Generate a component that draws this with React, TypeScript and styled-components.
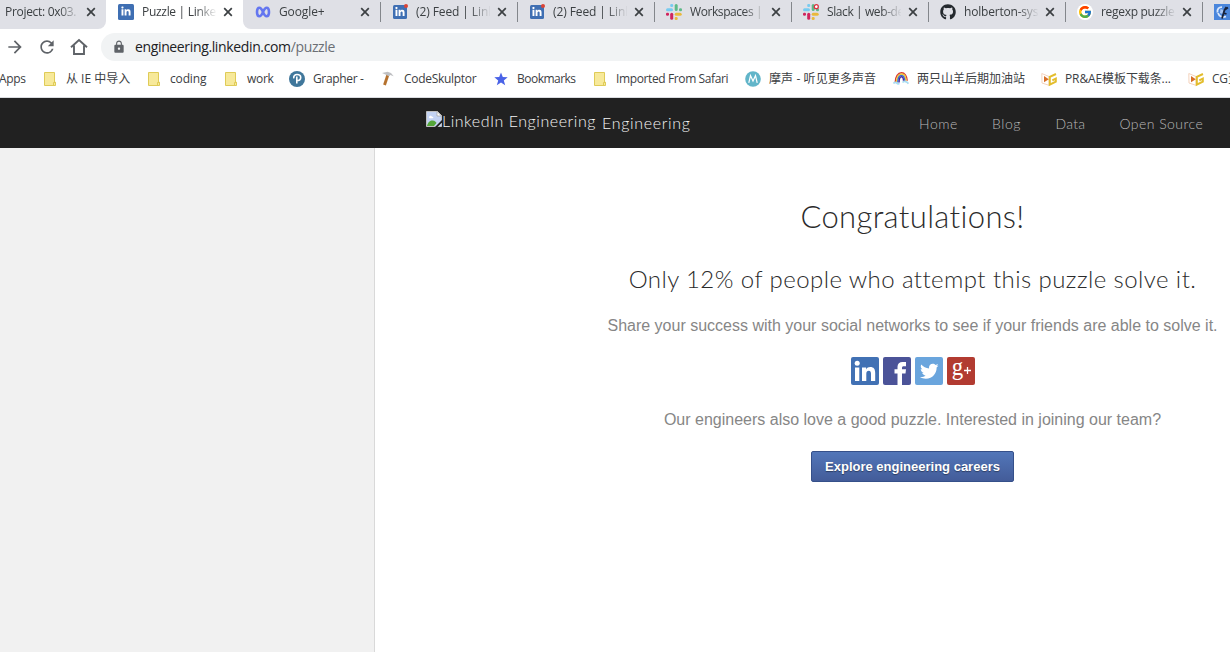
import React from "react";
import styled, { createGlobalStyle, css } from "styled-components";
import { FaGithub, FaLinkedinIn, FaTwitter } from "react-icons/fa";
import { FcGoogle } from "react-icons/fc";
import { MdArrowForward, MdLock, MdRefresh } from "react-icons/md";

const Global = createGlobalStyle`
  * { box-sizing: border-box; }
  body { margin: 0; background: #fff; overflow: hidden; }
`;

const uiFont = `"Open Sans", "Noto Sans CJK SC", sans-serif`;
const brandFont = `Lato, "Liberation Sans", sans-serif`;

const Window = styled.div`
  width: 1230px;
  height: 652px;
  display: flex;
  flex-direction: column;
  overflow: hidden;
`;

/* Tab strip */
const TabStrip = styled.div`
  display: flex;
  flex: none;
  height: 29px;
  margin-left: -31px;
`;

const TabBox = styled.div<{ $active?: boolean; $edge?: "before" | "after" }>`
  display: flex;
  align-items: center;
  flex: none;
  width: 137px;
  height: 29px;
  padding: 0 0 5px 12px;
  background: ${(p) => (p.$active ? "#fff" : "#dfe0e6")};
  ${(p) => p.$edge === "before" && css`border-bottom-right-radius: 8px;`}
  ${(p) => p.$edge === "after" && css`border-bottom-left-radius: 8px;`}
`;

const Divider = styled.i`
  flex: none;
  width: 1px;
  height: 20px;
  margin: 0 11px 0 -12px;
  background: #83868b;
`;

const TabIcon = styled.span`
  display: flex;
  flex: none;
  width: 16px;
  height: 16px;
  margin-right: 8px;
`;

const TabTitle = styled.span<{ $ls?: number }>`
  flex: none;
  width: 74px;
  height: 18px;
  overflow: hidden;
  white-space: nowrap;
  font: 12px/18px ${uiFont};
  letter-spacing: ${(p) => p.$ls ?? 0}px;
  color: #3c4043;
  mask-image: linear-gradient(to right, #000 54px, transparent 75px);
`;

const CloseIcon = styled.svg`
  flex: none;
  width: 10px;
  height: 10px;
  margin-left: 7px;
`;

/* Address row */
const Toolbar = styled.div`
  display: flex;
  align-items: center;
  flex: none;
  height: 36px;
  padding-left: 5px;
  color: #5f6368;
`;

const ToolIcon = styled.span`
  display: flex;
  flex: none;
  width: 20px;
  margin-right: 12px;
`;

const AddressBar = styled.div`
  display: flex;
  align-items: center;
  flex: 1;
  height: 28px;
  padding-left: 11px;
  border-radius: 14px 0 0 14px;
  background: #f1f3f4;
`;

const Url = styled.span`
  margin-left: 9px;
  white-space: nowrap;
  font: 14px/20px ${uiFont};
  letter-spacing: -0.36px;
  color: #202124;
  span { color: #6b6f74; }
`;

/* Bookmarks */
const BookmarksBar = styled.div`
  display: flex;
  align-items: center;
  flex: none;
  height: 33px;
  padding-bottom: 4px;
  border-bottom: 1px solid #dadce0;
`;

const Bookmark = styled.div<{ $w: number; $ls?: number }>`
  display: flex;
  align-items: center;
  flex: none;
  width: ${(p) => p.$w}px;
  gap: 8px;
  white-space: nowrap;
  font: 12px/18px ${uiFont};
  letter-spacing: ${(p) => p.$ls ?? 0}px;
  color: #3c4043;
  svg { flex: none; width: 16px; height: 16px; }
`;

const FirstBookmark = styled(Bookmark)`
  margin-left: -1px;
`;

/* Site */
const SiteHeader = styled.header`
  display: flex;
  align-items: center;
  flex: none;
  height: 50px;
  padding-left: 426px;
  background: #212121;
  font-family: ${brandFont};
`;

const Logo = styled.a`
  display: flex;
  flex: none;
  width: 493px;
  font-size: 16px;
  line-height: 20px;
  font-weight: 300;
  color: #f4f4f4;
  white-space: nowrap;
  svg { flex: none; width: 16px; height: 16px; margin-top: -2px; }
`;

const AltText = styled.span`
  width: 160px;
  margin-top: -2px;
  letter-spacing: 0.55px;
`;

const LogoName = styled.span`
  letter-spacing: 0.68px;
`;

const NavLink = styled.a<{ $w: number; $ls: number }>`
  flex: none;
  width: ${(p) => p.$w}px;
  padding-top: 2px;
  font-size: 14px;
  line-height: 20px;
  font-weight: 300;
  letter-spacing: ${(p) => p.$ls}px;
  white-space: nowrap;
  color: #b8b8b8;
`;

const Body = styled.div`
  display: flex;
  flex: 1;
`;

const Sidebar = styled.aside`
  flex: none;
  width: 375px;
  border-right: 1px solid #d9d9d9;
  background: #f1f1f1;
`;

const Content = styled.main`
  display: flex;
  flex-direction: column;
  align-items: center;
  flex: none;
  width: 1075px;
  padding-top: 48px;
  background: #fff;
`;

const Title = styled.h1`
  margin: 0;
  font: 300 31px/40px ${brandFont};
  letter-spacing: 0.35px;
  color: #2b2b2b;
`;

const Subtitle = styled.h2`
  margin: 26px 0 0;
  font: 300 24px/34px ${brandFont};
  letter-spacing: 0.43px;
  white-space: nowrap;
  color: #2b2b2b;
`;

const Copy = styled.p<{ $top: number }>`
  margin: ${(p) => p.$top}px 0 0;
  font: 16px/20px "Liberation Sans", Arial, sans-serif;
  white-space: nowrap;
  color: #868686;
`;

const ShareRow = styled.div`
  display: flex;
  gap: 4px;
  margin-top: 21px;
`;

const ShareButton = styled.a<{ $bg: string }>`
  display: flex;
  width: 28px;
  height: 28px;
  border-radius: 2px;
  overflow: hidden;
  background: ${(p) => p.$bg};
  color: #fff;
  > svg { width: 28px; height: 28px; }
`;

const CareersButton = styled.a`
  width: 203px;
  height: 31px;
  margin-top: 21px;
  border: 1px solid #35508a;
  border-radius: 2px;
  background: linear-gradient(#5276b9, #435c99);
  text-align: center;
  font: bold 13px/29px "Liberation Sans", Arial, sans-serif;
  color: #fff;
  text-shadow: 0 1px 1px rgba(0, 0, 0, 0.4);
`;

/* Icons */
const LinkedIn = ({ badge }: { badge?: boolean }) => (
  <svg viewBox="0 0 16 16" width="16" height="16">
    <rect x={badge ? 1 : 0} y={badge ? 1 : 0} width={badge ? 14 : 16} height={badge ? 14 : 16} rx="1.5" fill="#3f6fb3" />
    <FaLinkedinIn x="2.7" y={badge ? 2.8 : 2.3} size={10.5} color="#fff" />
    {badge && <circle cx="14" cy="2" r="2" fill="#db4437" />}
  </svg>
);

const Loops = () => (
  <svg viewBox="0 0 16 16" width="16" height="16" fill="none" stroke="#6476f0" strokeWidth="2.6">
    <path d="M8 8C6.8 5.2 5.8 3.7 4.4 3.7C2.8 3.7 2 5.7 2 8s.8 4.300 2.400 4.300C5.800 12.300 6.800 10.800 8 8s2.200-4.300 3.600-4.300c1.600 0 2.400 2 2.400 4.300s-.8 4.300-2.400 4.300C10.200 12.300 9.200 10.800 8 8z" />
  </svg>
);

const Slack = ({ alert }: { alert?: boolean }) => (
  <svg viewBox="0 0 16 16" width="16" height="16">
    <g fill="#78cbf0"><rect x="0" y="4.3" width="7" height="3" rx="1.5" /><rect x="4.2" y="0" width="3" height="3" rx="1.3" /></g>
    <g fill="#5dba88"><rect x="8.7" y="0" width="3" height="7" rx="1.5" /><rect x="13" y="4.3" width="3" height="3" rx="1.3" /></g>
    <g fill="#e9b93c"><rect x="8.7" y="8.7" width="7" height="3" rx="1.5" /><rect x="8.7" y="13" width="3" height="3" rx="1.3" /></g>
    <g fill="#d0245e"><rect x="4.2" y="8.7" width="3" height="7" rx="1.5" /><rect x="0" y="8.7" width="3" height="3" rx="1.3" /></g>
    {alert && <circle cx="13.3" cy="2.7" r="2" fill="#fff" stroke="#dc3340" strokeWidth="1.3" />}
  </svg>
);

const GoogleDisc = () => (
  <svg viewBox="0 0 16 16" width="16" height="16">
    <circle cx="8" cy="8" r="8" fill="#fff" />
    <FcGoogle x="0.8" y="0.8" size={14.4} />
  </svg>
);

const Painting = () => (
  <svg viewBox="0 0 16 16" width="16" height="16">
    <rect width="16" height="16" fill="#4a86dc" />
    <path d="M3.500 8.500C3 5 5 3 8 3.200M4 9c1 3 4 5 8 3.500" fill="none" stroke="#dbe8fb" strokeWidth="1.800" />
    <path d="M6.500 5l3 1-1 4-2.500-1z" fill="#a9c6f2" />
    <path d="M14 3.500L10.500 6 8 14.500M10.500 6l2-3M9.500 9l3 1" stroke="#18223a" strokeWidth="1.800" fill="none" />
  </svg>
);

const Close = () => (
  <CloseIcon viewBox="0 0 10 10">
    <path d="M1.200 1.200l7.600 7.600M8.800 1.200L1.200 8.800" stroke="#3c4043" strokeWidth="1.700" />
  </CloseIcon>
);

const HomeIcon = () => (
  <svg width="20" height="20" viewBox="0 0 20 20" fill="none" stroke="#5f6368" strokeWidth="1.900">
    <path d="M2 10.300L10 3l8 7.300M5 8.500V17h10V8.500" />
  </svg>
);

const Folder = () => (
  <svg viewBox="0 0 16 16">
    <path d="M2.500 1.500h10v9.700h1v3.300h-11z" fill="#f7e99a" stroke="#dfcb57" />
    <path d="M11.500 14.500v-3h2" fill="none" stroke="#dfcb57" />
  </svg>
);

const Pearson = () => (
  <svg viewBox="0 0 16 16">
    <circle cx="8" cy="8" r="8" fill="#40779b" />
    <path d="M4.800 7.400C4.300 4.800 6 3.500 8 3.500c2.300 0 3.700 1.200 3.700 2.900 0 2-1.500 3.100-3.900 3.100M7.800 5.500v7" fill="none" stroke="#fff" strokeWidth="1.600" />
  </svg>
);

const Hammer = () => (
  <svg viewBox="0 0 16 16">
    <path d="M8 3.500L4.500 14" stroke="#b5712d" strokeWidth="2.900" />
    <path d="M2 2L7.500.800l3.500 1.200 2.700 3.200-3.500-1.200-1.500 1.300L6 3.800z" fill="#bfc0c3" />
  </svg>
);

const Star = () => (
  <svg viewBox="0 0 16 16">
    <path d="M8 1.500l1.800 4.600 4.900.2-3.900 3.100 1.400 4.800L8 11.400l-4.200 2.800 1.400-4.800-3.900-3.100 4.900-.2z" fill="#4a63e7" />
  </svg>
);

const MDisc = () => (
  <svg viewBox="0 0 16 16">
    <circle cx="8" cy="8" r="7.800" fill="#61b5c9" />
    <path d="M3.800 11.800L5.500 4.500 8 10l2.500-5.500 1.700 7.300" fill="none" stroke="#fff" strokeWidth="1.200" />
  </svg>
);

const Rainbow = () => (
  <svg viewBox="0 0 16 16" fill="none" strokeWidth="1.400">
    <path d="M2.200 11.500C2.200 5.500 5 1.700 8.500 1.700c3 0 5.500 3 5.700 8" stroke="#d93b31" />
    <path d="M3.500 11.500C3.500 6.200 5.700 3 8.500 3s4.200 2.500 4.400 6.700" stroke="#f2cd35" />
    <path d="M4.800 11.500c0-4.500 1.700-7.100 3.700-7.100s3 2 3.200 5.400" stroke="#356dd5" />
    <path d="M6.100 11.500c0-3.500 1-5.700 2.400-5.700s1.900 1.500 2 4" stroke="#472a9b" />
    <path d="M.5 12.500c1-1.500 2.500-1.500 3.300-.3 1 1 2 .8 2.500 0M9.500 11.500c1.500-1.800 4.500-1 5.900 1.200" stroke="#a9dcf2" strokeWidth="1.700" />
  </svg>
);

const Cg = () => (
  <svg viewBox="0 0 16 16" fill="none">
    <path d="M.8 2.500L8 5.500v8.800L1 12z" stroke="#f4d3bd" />
    <path d="M3 5l4.800 3.200L3 11.300z" fill="#d86f28" />
    <path d="M15 3L8.800 5.800v7.900l6-3V7.600L11.300 9.300" stroke="#e3bd2c" strokeWidth="2" />
  </svg>
);

const BrokenImage = () => (
  <svg viewBox="0 0 16 16">
    <path d="M.5.500h11l4 4v11H.500z" fill="#c4d3f3" stroke="#c0c0c0" />
    <path d="M11 .500V5h4.500z" fill="#fff" stroke="#aaa" strokeWidth=".800" />
    <path d="M3 6.500c0-2 2.500-2.500 3-.800 1.500-.300 1.800 1.300.800 1.600H3.500z" fill="#fff" />
    <path d="M1 15c1-4 3-5.500 5.500-5.500S10 11 10.500 12L8 15z" fill="#55a63a" />
    <path d="M9 16l7-7v2.500L11.500 16z" fill="#212121" />
  </svg>
);

type TabData = { title: string; icon: React.ReactNode; ls?: number; active?: boolean; edge?: "before" | "after"; divider?: boolean };

const tabs: TabData[] = [
  { title: "Project: 0x03.", icon: null, ls: -0.3, edge: "before" },
  { title: "Puzzle | Linked", icon: <LinkedIn />, ls: -0.3, active: true },
  { title: "Google+", icon: <Loops />, ls: -0.1, edge: "after" },
  { title: "(2) Feed | Link", icon: <LinkedIn badge />, ls: -0.1, divider: true },
  { title: "(2) Feed | Link", icon: <LinkedIn badge />, ls: -0.1, divider: true },
  { title: "Workspaces |", icon: <Slack />, ls: -0.42, divider: true },
  { title: "Slack | web-de", icon: <Slack alert />, ls: -0.4, divider: true },
  { title: "holberton-sys", icon: <FaGithub size={16} color="#24292e" />, ls: -0.2, divider: true },
  { title: "regexp puzzle", icon: <GoogleDisc />, ls: -0.3, divider: true },
  { title: "", icon: <Painting />, divider: true },
];

const bookmarks = [
  { text: "从 IE 中导入", icon: <Folder />, w: 104, ls: 0 },
  { text: "coding", icon: <Folder />, w: 77, ls: -0.15 },
  { text: "work", icon: <Folder />, w: 66, ls: -0.3 },
  { text: "Grapher -", icon: <Pearson />, w: 91, ls: -0.35 },
  { text: "CodeSkulptor", icon: <Hammer />, w: 113, ls: -0.3 },
  { text: "Bookmarks", icon: <Star />, w: 99, ls: -0.52 },
  { text: "Imported From Safari", icon: <Folder />, w: 153, ls: -0.38 },
  { text: "摩声 - 听见更多声音", icon: <MDisc />, w: 148, ls: 0.1 },
  { text: "两只山羊后期加油站", icon: <Rainbow />, w: 148, ls: 0 },
  { text: "PR&AE模板下载条...", icon: <Cg />, w: 147, ls: -0.1 },
  { text: "CG资", icon: <Cg />, w: 80, ls: -0.2 },
];

const nav = [
  { text: "Home", w: 73, ls: 0.55 },
  { text: "Blog", w: 63.5, ls: 0.55 },
  { text: "Data", w: 64, ls: 0.3 },
  { text: "Open Source", w: 111, ls: 0.45 },
];

export default function App() {
  return (
    <Window>
      <Global />
      <TabStrip>
        {tabs.map((t, i) => (
          <TabBox key={i} $active={t.active} $edge={t.edge}>
            {t.divider && <Divider />}
            <TabIcon>{t.icon}</TabIcon>
            <TabTitle $ls={t.ls}>{t.title}</TabTitle>
            <Close />
          </TabBox>
        ))}
      </TabStrip>
      <Toolbar>
        <ToolIcon><MdArrowForward size={20} /></ToolIcon>
        <ToolIcon><MdRefresh size={20} /></ToolIcon>
        <ToolIcon><HomeIcon /></ToolIcon>
        <AddressBar>
          <MdLock size={14} />
          <Url>engineering.linkedin.com<span>/puzzle</span></Url>
        </AddressBar>
      </Toolbar>
      <BookmarksBar>
        <FirstBookmark $w={43} $ls={-0.3}>Apps</FirstBookmark>
        {bookmarks.map((b) => (
          <Bookmark key={b.text} $w={b.w} $ls={b.ls}>
            {b.icon}
            {b.text}
          </Bookmark>
        ))}
      </BookmarksBar>
      <SiteHeader>
        <Logo>
          <BrokenImage />
          <AltText>LinkedIn Engineering</AltText>
          <LogoName>Engineering</LogoName>
        </Logo>
        {nav.map((n) => (
          <NavLink key={n.text} $w={n.w} $ls={n.ls}>{n.text}</NavLink>
        ))}
      </SiteHeader>
      <Body>
        <Sidebar />
        <Content>
          <Title>Congratulations!</Title>
          <Subtitle>Only 12% of people who attempt this puzzle solve it.</Subtitle>
          <Copy $top={20}>Share your success with your social networks to see if your friends are able to solve it.</Copy>
          <ShareRow>
            <ShareButton $bg="#4171b4">
              <svg viewBox="0 0 28 28" fill="#fff">
                <circle cx="6.2" cy="6.2" r="2.5" />
                <path d="M4 10.500h4.300V24H4zM11 10.500h4.100v1.900c.9-1.500 2.300-2.300 4.200-2.300 3.400 0 4.900 2.100 4.900 5.900v8H20v-7.300c0-2-.7-3-2.200-3-1.600 0-2.500 1.100-2.500 3V24H11z" />
              </svg>
            </ShareButton>
            <ShareButton $bg="#4b5398">
              <svg viewBox="0 0 28 28" fill="#fff">
                <path d="M14.500 28V16.500H11.500V12.200h3V9.800C14.500 6.500 16.500 5 19.500 5H23v4.300h-2.200c-1.300 0-1.800.5-1.800 1.600v1.300h4l-.5 4.300H19V28z" />
              </svg>
            </ShareButton>
            <ShareButton $bg="#6aa5dd">
              <svg viewBox="0 0 28 28"><FaTwitter x="5" y="5" size={18.5} color="#fff" /></svg>
            </ShareButton>
            <ShareButton $bg="#b23b31">
              <svg viewBox="0 0 28 28" fill="#fff">
                <text transform="translate(4.8 17.8) scale(.88 1)" fontFamily="Liberation Serif, serif" fontSize="26">g</text>
                <path d="M17 13.500h7M20.500 10v7" stroke="#fff" strokeWidth="1.300" />
              </svg>
            </ShareButton>
          </ShareRow>
          <Copy $top={25}>Our engineers also love a good puzzle. Interested in joining our team?</Copy>
          <CareersButton>Explore engineering careers</CareersButton>
        </Content>
      </Body>
    </Window>
  );
}
